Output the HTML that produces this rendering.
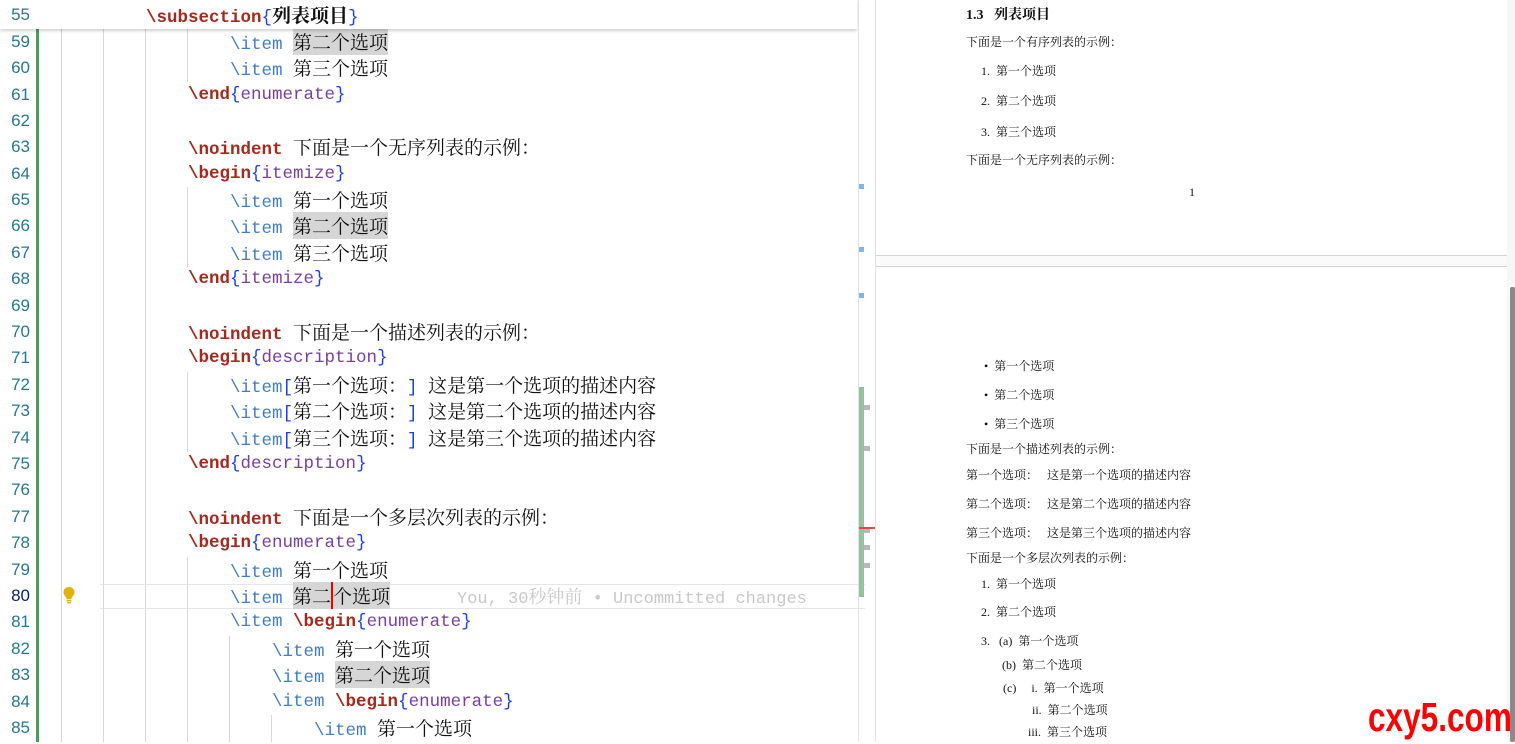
<!DOCTYPE html>
<html><head><meta charset="utf-8"><style>
*{margin:0;padding:0;box-sizing:border-box}
body{width:1515px;height:742px;overflow:hidden;background:#fff;position:relative;font-family:"Liberation Mono","Noto Serif CJK SC",monospace}
.ln{position:absolute;left:0;width:30px;text-align:right;color:#237893;font-size:17px;font-family:"Liberation Sans",sans-serif;height:26px;line-height:26px}
.cl{position:absolute;height:26px;line-height:26px;font-size:17.5px;white-space:pre;color:#000}
.k{color:#a52a1e;font-weight:bold}
.i{color:#3f7fc6}
.b{color:#1b3fe8}
.a{color:#7a3ea0}
.c{font-family:"Noto Serif CJK SC","Noto Sans CJK SC",serif;font-size:19px;color:#111}
.q{display:inline-block;width:19px}
.hl{background:#d6d6d6}
.g{position:absolute;width:1px;background:#d8d8d8}
.p{position:absolute;font-family:"Liberation Serif","Noto Serif CJK SC",serif;font-size:12px;color:#111;white-space:pre}
</style></head><body>
<div class="g" style="left:61px;top:29px;height:713px"></div>
<div class="g" style="left:103px;top:29px;height:713px"></div>
<div class="g" style="left:145px;top:29px;height:713px"></div>
<div class="g" style="left:187px;top:29px;height:53px"></div>
<div class="g" style="left:187px;top:187px;height:80px"></div>
<div class="g" style="left:187px;top:372px;height:80px"></div>
<div class="g" style="left:187px;top:557px;height:185px"></div>
<div class="g" style="left:229px;top:636px;height:106px"></div>
<div class="g" style="left:271px;top:715px;height:27px"></div>
<div style="position:absolute;left:36px;top:29px;width:3px;height:713px;background:#4a9e5c"></div>
<div style="position:absolute;left:100px;top:584px;width:765px;height:25px;border-top:1px solid #e6e6e6;border-bottom:1px solid #e6e6e6"></div>
<svg style="position:absolute;left:62px;top:586px" width="14" height="18" viewBox="0 0 14 18"><path d="M7 1C3.5 1 1.5 3.5 1.5 6.3c0 2.2 1.4 3.4 2.3 4.6.5.7.7 1.5.7 2.1h5c0-.6.2-1.4.7-2.1.9-1.2 2.3-2.4 2.3-4.6C12.5 3.5 10.5 1 7 1z" fill="#e2b10c"/><rect x="4.5" y="13.8" width="5" height="1.6" fill="#e2b10c"/><rect x="5" y="16" width="4" height="1.4" fill="#e2b10c"/></svg>

<div class="ln" style="top:29px">59</div><div class="cl" style="left:230px;top:29px"><span class="i">\item</span> <span class="c hl">第二个选项</span></div>
<div class="ln" style="top:55px">60</div><div class="cl" style="left:230px;top:55px"><span class="i">\item</span> <span class="c">第三个选项</span></div>
<div class="ln" style="top:82px">61</div><div class="cl" style="left:188px;top:82px"><span class="k">\end</span><span class="b">{</span><span class="a">enumerate</span><span class="b">}</span></div>
<div class="ln" style="top:108px">62</div>
<div class="ln" style="top:134px">63</div><div class="cl" style="left:188px;top:134px"><span class="k">\noindent</span> <span class="c">下面是一个无序列表的示例<span class="q">：</span></span></div>
<div class="ln" style="top:161px">64</div><div class="cl" style="left:188px;top:161px"><span class="k">\begin</span><span class="b">{</span><span class="a">itemize</span><span class="b">}</span></div>
<div class="ln" style="top:187px">65</div><div class="cl" style="left:230px;top:187px"><span class="i">\item</span> <span class="c">第一个选项</span></div>
<div class="ln" style="top:213px">66</div><div class="cl" style="left:230px;top:213px"><span class="i">\item</span> <span class="c hl">第二个选项</span></div>
<div class="ln" style="top:240px">67</div><div class="cl" style="left:230px;top:240px"><span class="i">\item</span> <span class="c">第三个选项</span></div>
<div class="ln" style="top:266px">68</div><div class="cl" style="left:188px;top:266px"><span class="k">\end</span><span class="b">{</span><span class="a">itemize</span><span class="b">}</span></div>
<div class="ln" style="top:293px">69</div>
<div class="ln" style="top:319px">70</div><div class="cl" style="left:188px;top:319px"><span class="k">\noindent</span> <span class="c">下面是一个描述列表的示例<span class="q">：</span></span></div>
<div class="ln" style="top:345px">71</div><div class="cl" style="left:188px;top:345px"><span class="k">\begin</span><span class="b">{</span><span class="a">description</span><span class="b">}</span></div>
<div class="ln" style="top:372px">72</div><div class="cl" style="left:230px;top:372px"><span class="i">\item</span><span class="b">[</span><span class="c">第一个选项<span class="q">：</span></span><span class="b">]</span> <span class="c">这是第一个选项的描述内容</span></div>
<div class="ln" style="top:398px">73</div><div class="cl" style="left:230px;top:398px"><span class="i">\item</span><span class="b">[</span><span class="c">第二个选项<span class="q">：</span></span><span class="b">]</span> <span class="c">这是第二个选项的描述内容</span></div>
<div class="ln" style="top:425px">74</div><div class="cl" style="left:230px;top:425px"><span class="i">\item</span><span class="b">[</span><span class="c">第三个选项<span class="q">：</span></span><span class="b">]</span> <span class="c">这是第三个选项的描述内容</span></div>
<div class="ln" style="top:451px">75</div><div class="cl" style="left:188px;top:451px"><span class="k">\end</span><span class="b">{</span><span class="a">description</span><span class="b">}</span></div>
<div class="ln" style="top:477px">76</div>
<div class="ln" style="top:504px">77</div><div class="cl" style="left:188px;top:504px"><span class="k">\noindent</span> <span class="c">下面是一个多层次列表的示例<span class="q">：</span></span></div>
<div class="ln" style="top:530px">78</div><div class="cl" style="left:188px;top:530px"><span class="k">\begin</span><span class="b">{</span><span class="a">enumerate</span><span class="b">}</span></div>
<div class="ln" style="top:557px">79</div><div class="cl" style="left:230px;top:557px"><span class="i">\item</span> <span class="c">第一个选项</span></div>
<div class="ln" style="top:583px;color:#0b216f">80</div><div class="cl" style="left:230px;top:583px"><span class="i">\item</span> <span class="c hl">第二<span style="border-left:2px solid #e00">个</span>选项</span></div>
<div class="cl" style="left:457px;top:583px;color:#c8c8c8;font-size:17px">You, 30<span class="c" style="color:#c8c8c8;font-size:18px">秒钟前</span> • Uncommitted changes</div>
<div class="ln" style="top:609px">81</div><div class="cl" style="left:230px;top:609px"><span class="i">\item</span> <span class="k">\begin</span><span class="b">{</span><span class="a">enumerate</span><span class="b">}</span></div>
<div class="ln" style="top:636px">82</div><div class="cl" style="left:272px;top:636px"><span class="i">\item</span> <span class="c">第一个选项</span></div>
<div class="ln" style="top:662px">83</div><div class="cl" style="left:272px;top:662px"><span class="i">\item</span> <span class="c hl">第二个选项</span></div>
<div class="ln" style="top:689px">84</div><div class="cl" style="left:272px;top:689px"><span class="i">\item</span> <span class="k">\begin</span><span class="b">{</span><span class="a">enumerate</span><span class="b">}</span></div>
<div class="ln" style="top:715px">85</div><div class="cl" style="left:314px;top:715px"><span class="i">\item</span> <span class="c">第一个选项</span></div>

<div style="position:absolute;left:0;top:0;width:857px;height:29px;background:#fff;box-shadow:0 2px 3px rgba(0,0,0,.18)"></div>
<div class="ln" style="top:2px">55</div><div class="cl" style="left:146px;top:2px"><span class="k">\subsection</span><span class="b">{</span><span class="c" style="font-weight:bold">列表项目</span><span class="b">}</span></div>

<div style="position:absolute;left:858px;top:0;width:1px;height:742px;background:#e2e2e2"></div>
<div style="position:absolute;left:875px;top:0;width:1px;height:742px;background:#e2e2e2"></div>
<div style="position:absolute;left:859px;top:184px;width:5px;height:5px;background:#7cb8e2"></div>
<div style="position:absolute;left:859px;top:247px;width:5px;height:5px;background:#7cb8e2"></div>
<div style="position:absolute;left:859px;top:293px;width:5px;height:5px;background:#7cb8e2"></div>
<div style="position:absolute;left:859px;top:387px;width:5px;height:210px;background:#93c29e"></div>
<div style="position:absolute;left:864px;top:405px;width:6px;height:5px;background:#b8b8b8"></div>
<div style="position:absolute;left:864px;top:446px;width:6px;height:5px;background:#b8b8b8"></div>
<div style="position:absolute;left:864px;top:528px;width:6px;height:5px;background:#b8b8b8"></div>
<div style="position:absolute;left:864px;top:545px;width:6px;height:5px;background:#b8b8b8"></div>
<div style="position:absolute;left:864px;top:563px;width:6px;height:5px;background:#b8b8b8"></div>
<div style="position:absolute;left:859px;top:527px;width:16px;height:2px;background:#e84545"></div>

<div style="position:absolute;left:876px;top:255px;width:631px;height:12px;background:#fafafa;border-top:1px solid #d4d4d4;border-bottom:1px solid #d4d4d4"></div>
<div style="position:absolute;left:1507px;top:0;width:8px;height:742px;background:#f7f7f7"></div>
<div style="position:absolute;left:1510px;top:287px;width:5px;height:455px;background:#8a8a8a;border-radius:2px"></div>

<div class="p" style="left:966px;top:4px;font-size:14px;font-weight:bold">1.3   列表项目</div>
<div class="p" style="left:966px;top:33px">下面是一个有序列表的示例：</div>
<div class="p" style="left:981px;top:62px">1.  第一个选项</div>
<div class="p" style="left:981px;top:92px">2.  第二个选项</div>
<div class="p" style="left:981px;top:123px">3.  第三个选项</div>
<div class="p" style="left:966px;top:151px">下面是一个无序列表的示例：</div>
<div class="p" style="left:1189px;top:185px">1</div>
<div class="p" style="left:984px;top:357px">•  第一个选项</div>
<div class="p" style="left:984px;top:386px">•  第二个选项</div>
<div class="p" style="left:984px;top:415px">•  第三个选项</div>
<div class="p" style="left:966px;top:440px">下面是一个描述列表的示例：</div>
<div class="p" style="left:966px;top:466px">第一个选项：   这是第一个选项的描述内容</div>
<div class="p" style="left:966px;top:495px">第二个选项：   这是第二个选项的描述内容</div>
<div class="p" style="left:966px;top:524px">第三个选项：   这是第三个选项的描述内容</div>
<div class="p" style="left:966px;top:549px">下面是一个多层次列表的示例：</div>
<div class="p" style="left:981px;top:575px">1.  第一个选项</div>
<div class="p" style="left:981px;top:603px">2.  第二个选项</div>
<div class="p" style="left:981px;top:632px">3.   (a)  第一个选项</div>
<div class="p" style="left:1002px;top:656px">(b)  第二个选项</div>
<div class="p" style="left:1003px;top:679px">(c)     i.  第一个选项</div>
<div class="p" style="left:1032px;top:701px">ii.  第二个选项</div>
<div class="p" style="left:1028px;top:723px">iii.  第三个选项</div>

<div style="position:absolute;left:1368px;top:693px;font-family:'Liberation Sans',sans-serif;font-weight:bold;font-size:41px;line-height:48px;color:#f00;white-space:nowrap;transform:scaleX(0.77);transform-origin:left">cxy5.com</div>
</body></html>
